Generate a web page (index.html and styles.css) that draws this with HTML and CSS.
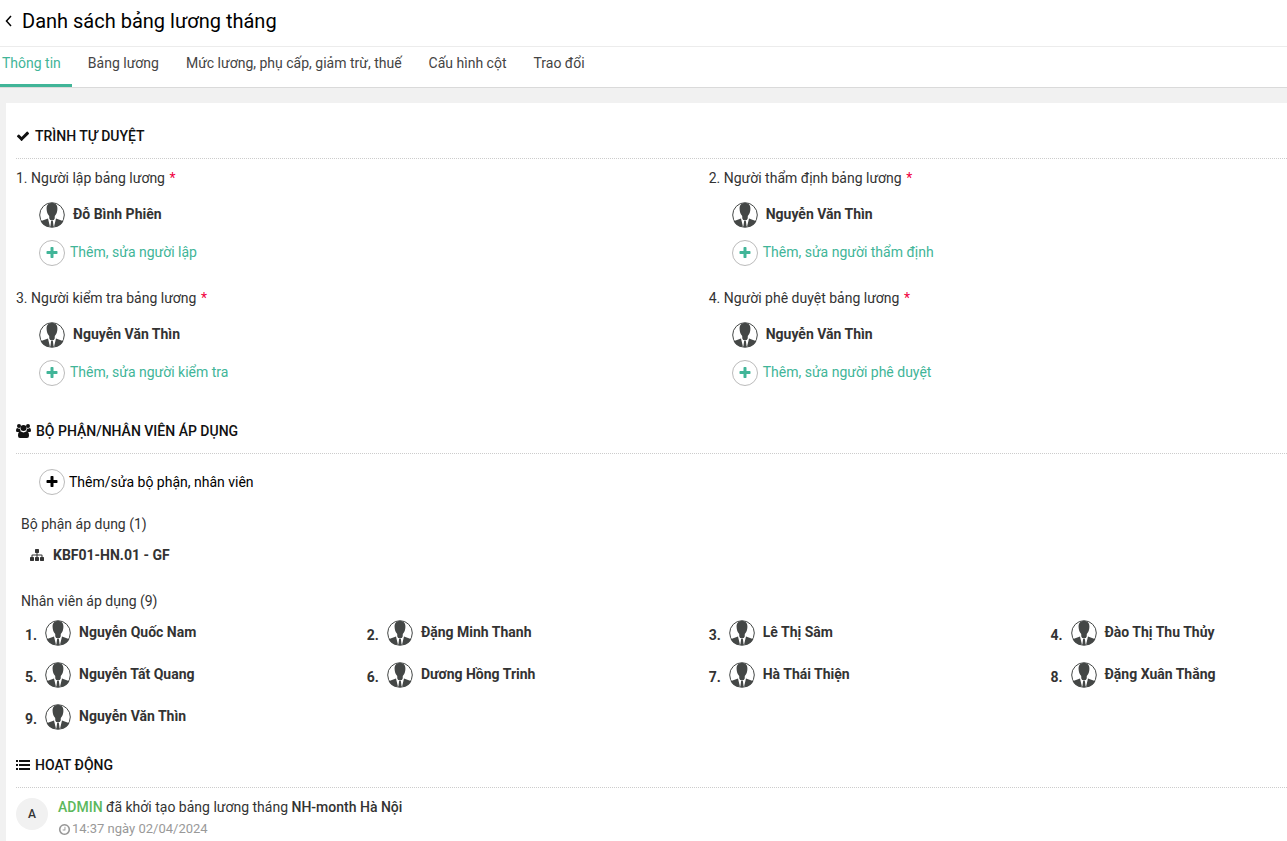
FILE: index.html
```html
<!DOCTYPE html>
<html lang="vi">
<head>
<meta charset="utf-8">
<title>Danh sách bảng lương tháng</title>
<link rel="stylesheet" href="styles.css">
</head>
<body>
<svg class="sprite" aria-hidden="true">
  <symbol id="check" viewBox="0 0 1792 1792"><path d="M1671 566q0 40-28 68l-724 724-136 136q-28 28-68 28t-68-28l-136-136-362-362q-28-28-28-68t28-68l136-136q28-28 68-28t68 28l294 295 656-657q28-28 68-28t68 28l136 136q28 28 28 68z"/></symbol>
  <symbol id="plus" viewBox="0 0 1792 1792"><path d="M1600 736v192q0 40-28 68t-68 28h-416v416q0 40-28 68t-68 28h-192q-40 0-68-28t-28-68v-416h-416q-40 0-68-28t-28-68v-192q0-40 28-68t68-28h416v-416q0-40 28-68t68-28h192q40 0 68 28t28 68v416h416q40 0 68 28t28 68z"/></symbol>
  <symbol id="clock" viewBox="0 0 1792 1792"><path d="M1024 544v448q0 14-9 23t-23 9h-320q-14 0-23-9t-9-23v-64q0-14 9-23t23-9h224v-352q0-14 9-23t23-9h64q14 0 23 9t9 23zm416 352q0-148-73-273t-198-198-273-73-273 73-198 198-73 273 73 273 198 198 273 73 273-73 198-198 73-273zm224 0q0 209-103 385.5t-279.5 279.5-385.5 103-385.5-103-279.5-279.5-103-385.5 103-385.5 279.5-279.5 385.5-103 385.5 103 279.5 279.5 103 385.5z"/></symbol>
  <symbol id="sitemap" viewBox="0 0 1792 1792"><path d="M1792 1248v320q0 40-28 68t-68 28h-320q-40 0-68-28t-28-68v-320q0-40 28-68t68-28h96v-192h-512v192h96q40 0 68 28t28 68v320q0 40-28 68t-68 28h-320q-40 0-68-28t-28-68v-320q0-40 28-68t68-28h96v-192h-512v192h96q40 0 68 28t28 68v320q0 40-28 68t-68 28h-320q-40 0-68-28t-28-68v-320q0-40 28-68t68-28h96v-192q0-52 38-90t90-38h512v-192h-96q-40 0-68-28t-28-68v-320q0-40 28-68t68-28h320q40 0 68 28t28 68v320q0 40-28 68t-68 28h-96v192h512q52 0 90 38t38 90v192h96q40 0 68 28t28 68z"/></symbol>
  <symbol id="users" viewBox="0 0 30 28"><circle cx="6" cy="4" r="4"/><circle cx="24" cy="4" r="4"/><circle cx="15" cy="8" r="6"/><path d="M2.500 8Q6 10.500 8 9Q8 12 9.500 14Q7 14.500 6 16H2.500Q0 16 0 13.500Q0 8 2.500 8zM27.500 8Q24 10.500 22 9Q22 12 20.500 14Q23 14.500 24 16H27.500Q30 16 30 13.500Q30 8 27.500 8zM9 14.500Q15 19 21 14.500Q26 14.500 26 23.500Q26 28 22 28H8Q4 28 4 23.500Q4 14.500 9 14.500z"/></symbol>
  <symbol id="list" viewBox="0 0 14 14"><path d="M0 2h2v2H0zM0 6h2v2H0zM0 10h2v2H0zM3 2h11v2H3zM3 6h11v2H3zM3 10h11v2H3z"/></symbol>
  <symbol id="person" viewBox="0 0 26 26"><circle cx="13" cy="13" r="12.300" fill="#fff" stroke="#444746" stroke-width="1"/><path fill="#444746" d="M13 1c3.900 0 5.600 2.200 5.400 6-.1 3-.9 5.300-2.600 7l-.1 2.400-.9 1.600h-3.600l-.9-1.600-.1-2.400C8.500 12.300 7.700 10 7.600 7 7.400 3.200 9.100 1 13 1zM9 16.500l1.800 7.500L9 25C5.800 24.300 3 22.300 1.600 19.300zM17 16.500 15.200 24l1.800 1c3.200-.7 6-2.700 7.400-5.700zM12.200 18.500h1.600l.9 6.500h-3.400z"/></symbol>
</svg>

<header class="page-header">
  <button class="back" type="button" aria-label="Quay lại"><svg viewBox="0 0 7 12"><path d="M6 1 1.500 6 6 11" fill="none" stroke="currentColor" stroke-width="1.500"/></svg></button>
  <h1 class="page-title">Danh sách bảng lương tháng</h1>
</header>
<nav class="tabs">
  <a class="tab active" href="#">Thông tin</a>
  <a class="tab" href="#">Bảng lương</a>
  <a class="tab" href="#">Mức lương, phụ cấp, giảm trừ, thuế</a>
  <a class="tab" href="#">Cấu hình cột</a>
  <a class="tab" href="#">Trao đổi</a>
</nav>

<main class="card">
  <section>
    <h2 class="heading"><svg class="icon"><use href="#check"/></svg>TRÌNH TỰ DUYỆT</h2>
    <div class="steps">
      <div class="step">
        <p class="label">1. Người lập bảng lương <span class="required">*</span></p>
        <div class="person"><svg class="avatar"><use href="#person"/></svg><span class="name">Đỗ Bình Phiên</span></div>
        <button class="add" type="button"><span class="ring"><svg class="icon"><use href="#plus"/></svg></span><span class="add-text">Thêm, sửa người lập</span></button>
      </div>
      <div class="step">
        <p class="label">2. Người thẩm định bảng lương <span class="required">*</span></p>
        <div class="person"><svg class="avatar"><use href="#person"/></svg><span class="name">Nguyễn Văn Thìn</span></div>
        <button class="add" type="button"><span class="ring"><svg class="icon"><use href="#plus"/></svg></span><span class="add-text">Thêm, sửa người thẩm định</span></button>
      </div>
      <div class="step">
        <p class="label">3. Người kiểm tra bảng lương <span class="required">*</span></p>
        <div class="person"><svg class="avatar"><use href="#person"/></svg><span class="name">Nguyễn Văn Thìn</span></div>
        <button class="add" type="button"><span class="ring"><svg class="icon"><use href="#plus"/></svg></span><span class="add-text">Thêm, sửa người kiểm tra</span></button>
      </div>
      <div class="step">
        <p class="label">4. Người phê duyệt bảng lương <span class="required">*</span></p>
        <div class="person"><svg class="avatar"><use href="#person"/></svg><span class="name">Nguyễn Văn Thìn</span></div>
        <button class="add" type="button"><span class="ring"><svg class="icon"><use href="#plus"/></svg></span><span class="add-text">Thêm, sửa người phê duyệt</span></button>
      </div>
    </div>
  </section>

  <section>
    <h2 class="heading"><svg class="icon wide"><use href="#users"/></svg>BỘ PHẬN/NHÂN VIÊN ÁP DỤNG</h2>
    <button class="add dark" type="button"><span class="ring"><svg class="icon"><use href="#plus"/></svg></span>Thêm/sửa bộ phận, nhân viên</button>
    <div class="applied">
      <p class="label">Bộ phận áp dụng (1)</p>
      <p class="department"><svg class="icon"><use href="#sitemap"/></svg>KBF01-HN.01 - GF</p>
      <p class="label">Nhân viên áp dụng (9)</p>
      <ol class="employees">
        <li class="employee"><span class="number">1.</span><svg class="avatar"><use href="#person"/></svg><span class="name">Nguyễn Quốc Nam</span></li>
        <li class="employee"><span class="number">2.</span><svg class="avatar"><use href="#person"/></svg><span class="name">Đặng Minh Thanh</span></li>
        <li class="employee"><span class="number">3.</span><svg class="avatar"><use href="#person"/></svg><span class="name">Lê Thị Sâm</span></li>
        <li class="employee"><span class="number">4.</span><svg class="avatar"><use href="#person"/></svg><span class="name">Đào Thị Thu Thủy</span></li>
        <li class="employee"><span class="number">5.</span><svg class="avatar"><use href="#person"/></svg><span class="name">Nguyễn Tất Quang</span></li>
        <li class="employee"><span class="number">6.</span><svg class="avatar"><use href="#person"/></svg><span class="name">Dương Hồng Trinh</span></li>
        <li class="employee"><span class="number">7.</span><svg class="avatar"><use href="#person"/></svg><span class="name">Hà Thái Thiện</span></li>
        <li class="employee"><span class="number">8.</span><svg class="avatar"><use href="#person"/></svg><span class="name">Đặng Xuân Thắng</span></li>
        <li class="employee"><span class="number">9.</span><svg class="avatar"><use href="#person"/></svg><span class="name">Nguyễn Văn Thìn</span></li>
      </ol>
    </div>
  </section>

  <section>
    <h2 class="heading"><svg class="icon"><use href="#list"/></svg>HOẠT ĐỘNG</h2>
    <div class="activity">
      <span class="initial">A</span>
      <div>
        <p class="event"><a class="user" href="#">ADMIN</a> đã khởi tạo bảng lương tháng <strong>NH-month Hà Nội</strong></p>
        <p class="time"><svg class="icon"><use href="#clock"/></svg>14:37 ngày 02/04/2024</p>
      </div>
    </div>
  </section>
</main>
</body>
</html>
```
FILE: styles.css
```css
* { box-sizing: border-box; }
body { display: flex; flex-direction: column; min-height: 100vh; margin: 0; background: #f1f1f1; color: #333; font: 14px/20px Roboto, "Noto Sans", sans-serif; }
h1, h2, p, ol { margin: 0; padding: 0; }
button { margin: 0; padding: 0; border: 0; background: none; color: inherit; font: inherit; cursor: pointer; }
a { text-decoration: none; }
.sprite { display: none; }
.icon { width: 14px; height: 14px; flex: none; fill: currentColor; }

.page-header { display: flex; align-items: center; gap: 10px; padding: 8px 5px 12px; background: #fff; border-bottom: 1px solid #ececec; color: #000; }
.back { display: flex; }
.back svg { width: 7px; height: 12px; }
.page-title { font-size: 20px; line-height: 26px; font-weight: 400; }

.tabs { display: flex; background: #fff; border-bottom: 1px solid #dadada; }
.tab { padding: 6px 11px 11px 16px; border-bottom: 3px solid transparent; color: #444; }
.tab.active { padding-left: 2px; color: #41b598; border-color: #41b598; }

.card { flex: 1; margin: 15px 0 0 6px; padding: 11px 0 0 10px; background: #fff; }
.heading { display: flex; align-items: center; gap: 5px; height: 45px; padding-bottom: 1px; border-bottom: 1px dotted #ccc; color: #111; font-size: 14px; font-weight: 500; }
.heading .wide { width: 15px; }

.steps { display: grid; grid-template-columns: 54.5% 1fr; row-gap: 22px; padding: 9px 0 23px; }
.required { margin-left: 1px; color: #f00040; }
.person { display: flex; align-items: center; gap: 8px; padding: 14px 0 12px 23px; }
.avatar { width: 26px; height: 26px; flex: none; }
.name { font-weight: 700; padding-bottom: 2px; }
.add { display: flex; align-items: center; gap: 5px; margin-left: 23px; color: #41b598; }
.add-text { padding-bottom: 2px; }
.ring { display: grid; place-items: center; width: 26px; height: 26px; border: 1px solid #bbb; border-radius: 50%; }
.add.dark { gap: 4px; margin-top: 15px; color: #000; }

.applied { padding: 19px 0 0 5px; }
.department { display: flex; align-items: center; gap: 9px; padding: 11px 0 26px 9px; font-weight: 700; }
.employees { display: grid; grid-template-columns: repeat(3, 27%) 1fr; row-gap: 16px; padding: 9px 0 13px; list-style: none; }
.employee { display: flex; align-items: center; gap: 8px; padding-left: 4px; font-weight: 700; }
.number { padding-top: 4px; }

.activity { display: flex; gap: 10px; padding-top: 9px; }
.initial { display: grid; place-items: center; width: 32px; height: 32px; margin-top: 1px; border-radius: 50%; background: #f1f1f1; font-size: 12px; font-weight: 500; }
.event strong, .user { font-weight: 500; }
.user { color: #5cb85c; }
.time { display: flex; align-items: center; gap: 1px; padding-top: 2px; color: #999; font-size: 13px; }
.time .icon { width: 13px; height: 13px; }
```
